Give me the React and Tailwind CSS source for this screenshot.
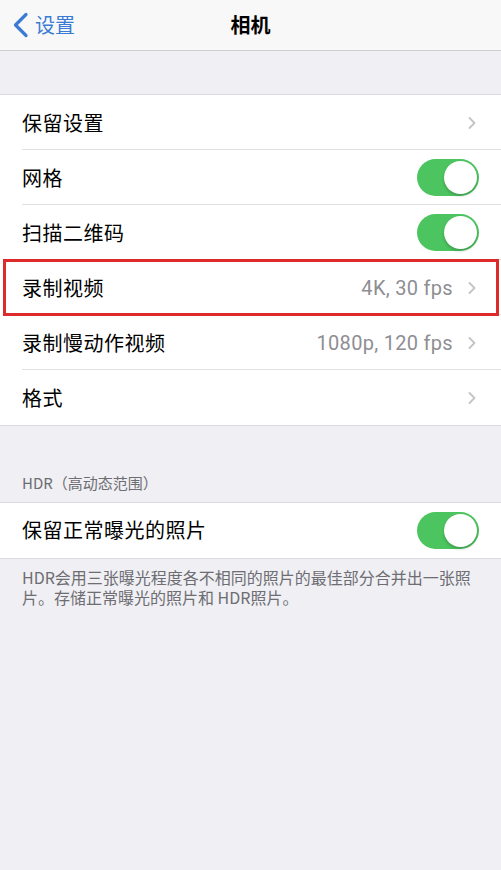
import React from 'react';
import { ChevronRight } from 'lucide-react';

const font = { fontFamily: '"Noto Sans CJK SC", "Noto Sans", sans-serif' };

const Toggle = () => (
    <div className="w-[62px] h-[37px] rounded-full bg-[#4cc45f] flex items-center justify-end px-[2px]">
        <div className="w-[33px] h-[33px] rounded-full bg-white shadow-[0_2px_3px_rgba(0,0,0,0.2)]" />
    </div>
);

const Chevron = () => <ChevronRight className="w-[20px] h-[20px] text-[#c4c4c8]" strokeWidth={2.2} />;

const Row = ({ label, value, toggle, last, highlight }) => (
    <div className="relative h-[55px] bg-white flex items-center pl-[22px] pr-[22px]">
        <span className="flex-1 text-[20px] text-black tracking-[0.5px]">{label}</span>
        {value && <span className="text-[20px] text-[#8e8e93] mr-[9px] tracking-[0.3px]" style={{ fontFamily: 'Roboto, "Noto Sans", sans-serif' }}>{value}</span>}
        {toggle ? <Toggle /> : <span className="-mr-[3px]"><Chevron /></span>}
        {!last && <div className="absolute bottom-0 left-[22px] right-0 h-px bg-[#e0e0e3]" />}
        {highlight && <div className="absolute -top-px -bottom-px left-[3px] right-[2px] border-[3px] border-[#dd2a2a] z-10" />}
    </div>
);

export default function App() {
    return (
        <div className="w-[501px] h-[870px] bg-[#efeff4] overflow-hidden" style={font}>
            <div className="h-[51px] bg-[#f8f8f8] border-b border-[#cfcfd2] flex items-center relative">
                <div className="flex items-center text-[#3a7bd5] pl-[12px]">
                    <svg width="17" height="26" viewBox="0 0 17 26" fill="none">
                        <path d="M14 2.5 L3.5 13 L14 23.5" stroke="currentColor" strokeWidth="3.2" strokeLinecap="round" strokeLinejoin="round" />
                    </svg>
                    <span className="text-[20px] ml-[6px]">设置</span>
                </div>
                <span className="absolute left-0 right-0 text-center text-[20px] font-semibold text-black pointer-events-none">相机</span>
            </div>

            <div className="h-[43px]" />

            <div className="border-t border-b border-[#dcdce0] bg-white">
                <Row label="保留设置" />
                <Row label="网格" toggle />
                <Row label="扫描二维码" toggle />
                <Row label="录制视频" value="4K, 30 fps" highlight />
                <Row label="录制慢动作视频" value="1080p, 120 fps" />
                <Row label="格式" last />
            </div>

            <div className="pt-[46px] pb-[7px] pl-[22px] text-[15px] text-[#6d6d72]">HDR（高动态范围）</div>

            <div className="border-t border-b border-[#dcdce0] bg-white">
                <Row label="保留正常曝光的照片" toggle last />
            </div>

            <p className="pt-[8px] pl-[22px] pr-[14px] text-[16px] leading-[20px] text-[#6d6d72]">
                HDR会用三张曝光程度各不相同的照片的最佳部分合并出一张照片。存储正常曝光的照片和 HDR照片。
            </p>
        </div>
    );
}
